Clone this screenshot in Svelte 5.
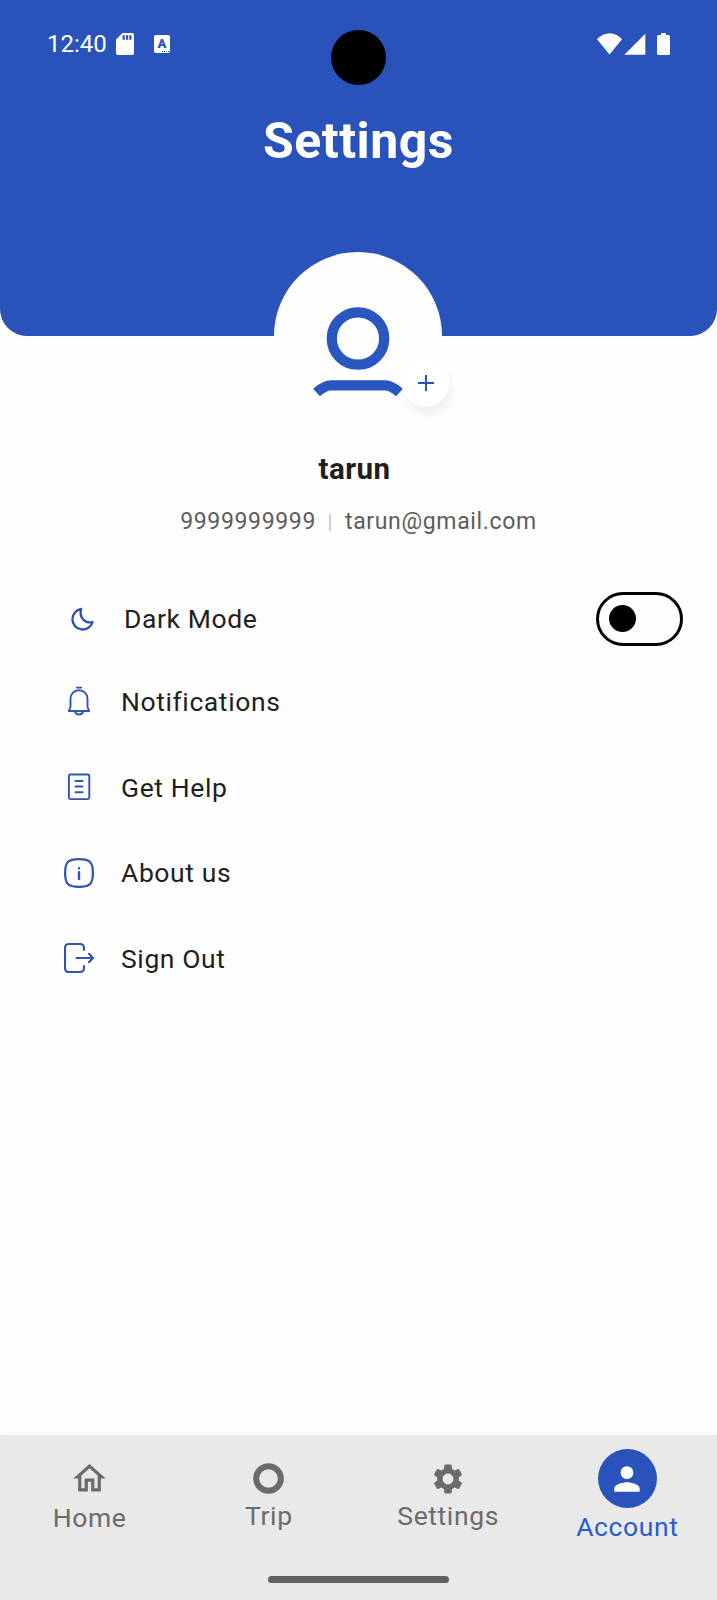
<script>
	let darkMode = $state(false);
	let active = $state('account');

	const user = { name: 'tarun', phone: '9999999999', email: 'tarun@gmail.com' };

	const menu = [
		{ id: 'notifications', label: 'Notifications' },
		{ id: 'help', label: 'Get Help' },
		{ id: 'about', label: 'About us' },
		{ id: 'signout', label: 'Sign Out' }
	];

	const tabs = [
		{ id: 'home', label: 'Home' },
		{ id: 'trip', label: 'Trip' },
		{ id: 'settings', label: 'Settings' },
		{ id: 'account', label: 'Account' }
	];
</script>

<div class="screen">
	<header class="header">
		<div class="status-bar">
			<span class="time">12:40</span>
			<svg class="sd" width="18" height="22" viewBox="0 0 18 22">
				<path fill="#fff" fill-rule="evenodd" d="M6.5 0H16a2 2 0 0 1 2 2v18a2 2 0 0 1-2 2H2a2 2 0 0 1-2-2V6.5zM6.600 2.300v4.400h2.200v-4.400zM10 2.300v4.400h2.200v-4.400zM13.300 2.300v4.400h2.200v-4.400z" />
			</svg>
			<span class="lang">A<i></i></span>
			<span class="camera"></span>
			<svg class="signals" width="74" height="22" viewBox="0 0 74 22" fill="#fff">
				<path d="M0 6.300C7-1.700 18-1.700 25 6.300L12.500 21.500z" />
				<path d="M48.300 .7v21H27.300z" />
				<path d="M64 0h5v2h2.500a1.500 1.500 0 0 1 1.500 1.500v17a1.500 1.500 0 0 1-1.500 1.500h-10a1.500 1.500 0 0 1-1.500-1.500v-17a1.500 1.500 0 0 1 1.500-1.500H64z" />
			</svg>
		</div>
		<h1>Settings</h1>
	</header>

	<section class="profile">
		<div class="avatar">
			<svg width="168" height="168" viewBox="0 0 168 168" fill="none" stroke="#2a56c0" stroke-width="10.300">
				<circle cx="84" cy="86.500" r="26.200" />
				<path d="M42.500 140.500C47 136.500 51 133.300 57 133.300h54c6 0 10 3.200 14.500 7.200" />
			</svg>
			<button class="add" aria-label="Add photo">
				<svg width="16" height="16" viewBox="0 0 16 16" stroke="#2952bb" stroke-width="2">
					<path d="M8 0v16M0 8h16" />
				</svg>
			</button>
		</div>
		<h2>{user.name}</h2>
		<p class="contact">
			<span>{user.phone}</span>
			<span class="divider"></span>
			<span>{user.email}</span>
		</p>
	</section>

	<main class="menu">
		<div class="row dark-row">
			<svg class="icon" width="30" height="30" viewBox="0 0 30 30" fill="none" stroke="#2f4fae" stroke-width="2.300" stroke-linejoin="round">
				<path d="M14.300 5A10.300 10.300 0 1 0 25.600 18C18.500 20 11.500 13.500 14.300 5z" />
			</svg>
			<span>Dark Mode</span>
			<button class="toggle" class:on={darkMode} aria-label="Dark Mode" onclick={() => (darkMode = !darkMode)}>
				<span class="knob"></span>
			</button>
		</div>

		{#each menu as item (item.id)}
			<div class="row">
				<svg class="icon" width="30" height="30" viewBox="0 0 30 30" fill="none" stroke="#2f54b6" stroke-width="1.900" stroke-linecap="round" stroke-linejoin="round">
					{#if item.id === 'notifications'}
						<path d="M12.700 1.600h4.600M4.800 25h20.400M6.500 21V12.700a8.500 8.500 0 0 1 17 0V21l1.700 4M6.500 21l-1.700 4" />
						<path d="M11 25.500c.8 4 7.200 4 8 0" />
					{:else if item.id === 'help'}
						<rect x="4.900" y="2.500" width="20.400" height="24.600" rx="1.500" />
						<path d="M11.500 9h7M11.500 14.500h7M11.500 20.300h7" />
					{:else if item.id === 'about'}
						<path stroke-width="2.200" d="M15 1.100C26 1.100 28.900 4 28.900 15S26 28.900 15 28.900 1.100 26 1.100 15 4 1.100 15 1.100z" />
						<path stroke-width="2.400" d="M15 14.200v6.700M15 10.100v.1" />
					{:else}
						<path stroke-width="2.100" d="M20 7V5c0-2.600-1.400-4-4-4H5C2.400 1 1 2.400 1 5v20c0 2.600 1.400 4 4 4h11c2.600 0 4-1.400 4-4v-2" />
						<path stroke-width="2.100" d="M12.500 15H29M25 10.800l4 4.200-4 4.200" />
					{/if}
				</svg>
				<span>{item.label}</span>
			</div>
		{/each}
	</main>

	<nav class="tabs">
		{#each tabs as tab (tab.id)}
			<button class="tab {tab.id}" class:active={active === tab.id} onclick={() => (active = tab.id)}>
				<span class="tab-icon">
					{#if tab.id === 'home'}
						<svg width="39" height="39" viewBox="0 0 24 24" fill="currentColor">
							<path d="M12 5.690l5 4.500V18h-2v-6H9v6H7v-7.810l5-4.500M12 3L2 12h3v8h6v-6h2v6h6v-8h3L12 3z" />
						</svg>
					{:else if tab.id === 'trip'}
						<svg width="39" height="39" viewBox="0 0 24 24" fill="none" stroke="currentColor" stroke-width="3.700">
							<circle cx="12" cy="12" r="7.600" />
						</svg>
					{:else if tab.id === 'settings'}
						<svg width="36" height="36" viewBox="0 0 24 24" fill="currentColor">
							<path d="M19.140 12.940c.04-.3.060-.61.060-.94 0-.32-.02-.64-.07-.94l2.030-1.580c.18-.14.23-.41.120-.61l-1.920-3.320c-.12-.22-.37-.29-.59-.22l-2.390.96c-.5-.38-1.030-.7-1.620-.94l-.36-2.540c-.04-.24-.24-.41-.48-.41h-3.840c-.24 0-.43.17-.47.41l-.36 2.540c-.59.24-1.130.57-1.620.94l-2.390-.96c-.22-.08-.47 0-.59.22L2.740 8.870c-.12.210-.08.470.12.610l2.030 1.580c-.05.300-.09.630-.09.940s.02.640.07.940l-2.030 1.580c-.18.140-.23.410-.12.610l1.920 3.320c.12.220.37.290.59.220l2.390-.96c.5.380 1.030.7 1.620.94l.36 2.540c.05.240.24.410.48.410h3.840c.24 0 .44-.17.47-.41l.36-2.540c.59-.24 1.130-.56 1.620-.94l2.390.96c.22.080.47 0 .59-.22l1.920-3.320c.12-.22.070-.47-.12-.61l-2.010-1.580zM12 15.600c-1.980 0-3.600-1.620-3.600-3.600s1.620-3.600 3.600-3.600 3.600 1.620 3.600 3.600-1.620 3.600-3.600 3.600z" />
						</svg>
					{:else}
						<svg width="38" height="38" viewBox="0 0 24 24" fill="currentColor">
							<path d="M12 12c2.210 0 4-1.790 4-4s-1.790-4-4-4-4 1.790-4 4 1.790 4 4 4zm0 2c-2.670 0-8 1.340-8 4v2h16v-2c0-2.660-5.330-4-8-4z" />
						</svg>
					{/if}
				</span>
				<span class="tab-label">{tab.label}</span>
			</button>
		{/each}
		<span class="home-bar"></span>
	</nav>
</div>

<style>
	:global(body) {
		background: #fefefe;
	}

	.screen {
		display: flex;
		flex-direction: column;
		width: 717px;
		height: 1600px;
		overflow: hidden;
		background: #fefefe;
		color: #1f1f1f;
		font-family: Roboto, "Liberation Sans", sans-serif;
	}

	button {
		padding: 0;
		border: none;
		background: none;
		color: inherit;
		font: inherit;
		cursor: pointer;
	}

	.header {
		flex: none;
		height: 336px;
		border-radius: 0 0 27px 27px;
		background: #2952bb;
		color: #fff;
	}

	.status-bar {
		position: relative;
		display: flex;
		align-items: center;
		box-sizing: border-box;
		height: 87px;
		padding: 0 46px 0 47px;
	}

	.time {
		width: 69px;
		font-size: 24px;
	}

	.lang {
		position: relative;
		width: 16px;
		height: 18px;
		margin-left: 20px;
		border-radius: 2px;
		background: #fff;
		color: #2952bb;
		font-size: 13px;
		font-weight: 900;
		line-height: 17px;
		text-align: center;
	}

	.lang i {
		position: absolute;
		right: 1px;
		bottom: 1px;
		width: 7px;
		border-bottom: 1px dotted #2952bb;
	}

	.signals {
		margin-left: auto;
	}

	.camera {
		position: absolute;
		top: 29.500px;
		left: 331px;
		width: 55px;
		height: 55px;
		border-radius: 50%;
		background: #000;
	}

	h1 {
		margin: 24px 0 0;
		font-size: 50px;
		font-weight: 700;
		line-height: 60px;
		letter-spacing: 0.500px;
		text-align: center;
	}

	.profile {
		display: flex;
		flex-direction: column;
		align-items: center;
		margin-top: -84px;
	}

	.avatar {
		position: relative;
		width: 168px;
		height: 168px;
		margin-right: 1px;
		border-radius: 50%;
		background: #fefefe;
	}

	.add {
		position: absolute;
		right: -7px;
		bottom: 13px;
		display: flex;
		align-items: center;
		justify-content: center;
		width: 47px;
		height: 48px;
		border-radius: 50%;
		background: #fff;
		box-shadow: 3px 8px 8px rgba(0, 0, 0, 0.06);
	}

	h2 {
		margin: 31px 8px 0 0;
		font-size: 29.500px;
		font-weight: 700;
		line-height: 36px;
		letter-spacing: 0.500px;
	}

	.contact {
		display: flex;
		align-items: center;
		margin: 20px 0 0;
		color: #5c5c5c;
		font-size: 23px;
		line-height: 30px;
		letter-spacing: 0.650px;
	}

	.divider {
		width: 2px;
		height: 17px;
		margin: 0 14px 0 13px;
		background: #d0d0d0;
	}

	.menu {
		flex: 1;
		margin-top: 54.500px;
		font-size: 26.500px;
		letter-spacing: 0.600px;
	}

	.row {
		display: flex;
		align-items: center;
		gap: 27px;
		height: 85.700px;
		padding-left: 64px;
	}

	.dark-row {
		height: 54px;
		margin-bottom: 13px;
		padding: 0 34px 0 67px;
	}

	.icon {
		flex: none;
	}

	.toggle {
		display: flex;
		align-items: center;
		box-sizing: border-box;
		width: 87px;
		height: 54px;
		margin-left: auto;
		padding: 0 10px;
		border: 3px solid #000;
		border-radius: 27px;
	}

	.toggle.on {
		justify-content: flex-end;
	}

	.knob {
		width: 27px;
		height: 27px;
		border-radius: 50%;
		background: #000;
	}

	.tabs {
		position: relative;
		display: grid;
		grid-template-columns: repeat(4, 1fr);
		flex: none;
		height: 165px;
		background: #e9e9e9;
		color: #6b6b6b;
		box-shadow: 0 -2px 8px rgba(0, 0, 0, 0.03);
	}

	.tab {
		display: flex;
		flex-direction: column;
		align-items: center;
		padding-top: 14px;
		font-size: 26.500px;
		letter-spacing: 0.600px;
	}

	.tab-icon {
		display: flex;
		align-items: center;
		justify-content: center;
		width: 59px;
		height: 59px;
		border-radius: 50%;
	}

	.tab-label {
		margin-top: -7px;
		line-height: 30px;
	}

	.home .tab-label {
		margin-top: -5px;
	}

	.active {
		color: #2a5bd0;
	}

	.active .tab-icon {
		background: #2952bb;
		color: #fff;
	}

	.active .tab-label {
		margin-top: 4px;
	}

	.home-bar {
		position: absolute;
		bottom: 17px;
		left: 268px;
		width: 181px;
		height: 7px;
		border-radius: 4px;
		background: #606060;
	}
</style>
